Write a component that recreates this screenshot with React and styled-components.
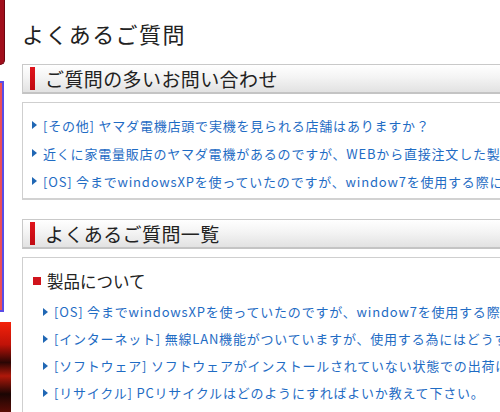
import React from "react";
import styled, { createGlobalStyle } from "styled-components";

const Global = createGlobalStyle`
  html, body { margin: 0; padding: 0; background: #fff; }
  body { width: 500px; height: 412px; overflow: hidden; font-family: "Noto Sans CJK JP", "Noto Sans", sans-serif; }
`;

const Page = styled.div`
  display: flex;
  width: 500px;
  height: 412px;
  overflow: hidden;
  gap: 10px;
`;

const Sidebar = styled.div`
  flex: 0 0 12px;
  display: flex;
  flex-direction: column;
  align-items: flex-start;
`;

const LogoTab = styled.div`
  width: 4px;
  height: 64px;
  background: #a10f1c;
  border: 1px solid #6d0510;
  border-left: none;
  border-top: none;
  border-bottom-right-radius: 7px;
`;

const Banner = styled.div`
  margin-top: 16px;
  width: 2px;
  height: 229px;
  background: #ec4f55;
  border: 2px solid #5a4be6;
  border-left: none;
`;

const Photo = styled.div`
  margin-top: 10px;
  width: 11px;
  height: 90px;
  background: linear-gradient(180deg, #f4220a 0%, #c01208 25%, #2a0604 45%, #b0180a 60%, #1a0503 80%, #5a0c06 100%);
`;

const Main = styled.div`
  flex: 0 0 620px;
  display: flex;
  flex-direction: column;
  padding-top: 18px;
`;

const Title = styled.h1`
  margin: 0 0 16px;
  font-size: 22px;
  line-height: 30px;
  font-weight: 400;
  letter-spacing: 1.4px;
  color: #222;
`;

const SectionHead = styled.h2`
  margin: 0 0 8px;
  display: flex;
  align-items: center;
  gap: 10px;
  height: 30px;
  padding-left: 7px;
  border: 1px solid #c9c9c9;
  border-bottom: 2px solid #c4c4c4;
  background: linear-gradient(180deg, #ffffff 0%, #f4f4f4 45%, #e2e2e2 100%);
  font-size: 19px;
  font-weight: 400;
  letter-spacing: 0.4px;
  color: #222;
  &::before {
    content: "";
    width: 5px;
    height: 23px;
    background: linear-gradient(180deg, #e0141c, #c00a12);
  }
`;

const Box = styled.div`
  margin-bottom: ${(p) => p.$mb || 0}px;
  border: 1px solid #cfcfcf;
  border-bottom: 2px solid #d2d2d2;
  padding: ${(p) => p.$pad};
  display: flex;
  flex-direction: column;
`;

const Category = styled.h3`
  margin: 0 0 3px;
  display: flex;
  align-items: center;
  gap: 6px;
  font-size: 16.5px;
  line-height: 28px;
  font-weight: 400;
  color: #222;
  &::before {
    content: "";
    width: 8px;
    height: 8px;
    background: #d0141c;
  }
`;

const List = styled.ul`
  margin: 0;
  padding: 0 0 0 ${(p) => p.$indent || 0}px;
  list-style: none;
`;

const Item = styled.li`
  display: flex;
  align-items: center;
  gap: 6px;
  height: ${(p) => p.$h}px;
  white-space: nowrap;
  &::before {
    content: "";
    flex: 0 0 auto;
    width: 0;
    height: 0;
    border-top: 4px solid transparent;
    border-bottom: 4px solid transparent;
    border-left: 5px solid #2067b4;
  }
`;

const Link = styled.a`
  color: #1f6cc4;
  font-size: 13px;
  text-decoration: none;
  letter-spacing: 0.8px;
`;

const popular = [
  "[その他] ヤマダ電機店頭で実機を見られる店舗はありますか？",
  "近くに家電量販店のヤマダ電機があるのですが、WEBから直接注文した製品を店頭で受け取ることはできますか？",
  "[OS] 今までwindowsXPを使っていたのですが、window7を使用する際に気をつけることはありますか？",
];

const products = [
  "[OS] 今までwindowsXPを使っていたのですが、window7を使用する際に気をつけることはありますか？",
  "[インターネット] 無線LAN機能がついていますが、使用する為にはどうすればよいですか？",
  "[ソフトウェア] ソフトウェアがインストールされていない状態での出荷はできますか？",
  "[リサイクル] PCリサイクルはどのようにすればよいか教えて下さい。",
];

export default function App() {
  return (
    <>
      <Global />
      <Page>
        <Sidebar>
          <LogoTab />
          <Banner />
          <Photo />
        </Sidebar>
        <Main>
          <Title>よくあるご質問</Title>
          <SectionHead>ご質問の多いお問い合わせ</SectionHead>
          <Box $pad="8px 0 3px 9px" $mb={19}>
            <List>
              {popular.map((t) => (
                <Item key={t} $h={28}>
                  <Link href="#">{t}</Link>
                </Item>
              ))}
            </List>
          </Box>
          <SectionHead>よくあるご質問一覧</SectionHead>
          <Box $pad="9px 0 10px 10px">
            <Category>製品について</Category>
            <List $indent={10}>
              {products.map((t) => (
                <Item key={t} $h={27}>
                  <Link href="#">{t}</Link>
                </Item>
              ))}
            </List>
          </Box>
        </Main>
      </Page>
    </>
  );
}
